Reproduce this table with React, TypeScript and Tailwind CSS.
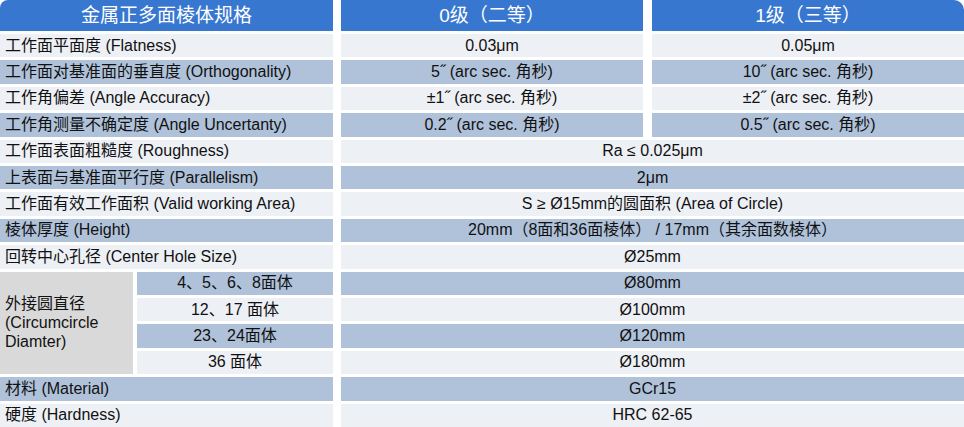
const FONT = { fontFamily: '"Liberation Sans", Arial, "Noto Sans CJK SC", sans-serif' };

const LIGHT = "bg-[#edf0f5]";
const DARK = "bg-[#afc2da]";

type Row = { label: string; a: string; b?: string; dark: boolean };

const topRows: Row[] = [
  { label: "工作面平面度 (Flatness)", a: "0.03μm", b: "0.05μm", dark: false },
  { label: "工作面对基准面的垂直度 (Orthogonality)", a: "5˝ (arc sec. 角秒)", b: "10˝ (arc sec. 角秒)", dark: true },
  { label: "工作角偏差 (Angle Accuracy)", a: "±1˝ (arc sec. 角秒)", b: "±2˝ (arc sec. 角秒)", dark: false },
  { label: "工作角测量不确定度 (Angle Uncertanty)", a: "0.2˝ (arc sec. 角秒)", b: "0.5˝ (arc sec. 角秒)", dark: true },
  { label: "工作面表面粗糙度 (Roughness)", a: "Ra ≤ 0.025μm", dark: false },
  { label: "上表面与基准面平行度 (Parallelism)", a: "2μm", dark: true },
  { label: "工作面有效工作面积 (Valid working Area)", a: "S ≥ Ø15mm的圆面积 (Area of Circle)", dark: false },
  { label: "棱体厚度 (Height)", a: "20mm（8面和36面棱体） / 17mm（其余面数棱体）", dark: true },
  { label: "回转中心孔径 (Center Hole Size)", a: "Ø25mm", dark: false },
];

const subRows = [
  { faces: "4、5、6、8面体", d: "Ø80mm", dark: true },
  { faces: "12、17 面体", d: "Ø100mm", dark: false },
  { faces: "23、24面体", d: "Ø120mm", dark: true },
  { faces: "36 面体", d: "Ø180mm", dark: false },
];

const bottomRows: Row[] = [
  { label: "材料 (Material)", a: "GCr15", dark: true },
  { label: "硬度 (Hardness)", a: "HRC 62-65", dark: false },
];

function LabelRow({ row }: { row: Row }) {
  const bg = row.dark ? DARK : LIGHT;
  return (
    <>
      <div className={`col-span-2 flex items-center pl-[5px] ${bg}`}>{row.label}</div>
      {row.b ? (
        <>
          <div className={`ml-[4px] flex items-center justify-center ${bg}`}>{row.a}</div>
          <div className={`ml-[5px] flex items-center justify-center ${bg}`}>{row.b}</div>
        </>
      ) : (
        <div className={`col-span-2 ml-[4px] flex items-center justify-center ${bg}`}>{row.a}</div>
      )}
    </>
  );
}

export default function App() {
  return (
    <div
      className="grid h-[427px] w-[964px] grid-cols-[133px_196px_306px_1fr] grid-rows-[31px_repeat(15,minmax(0,1fr))] gap-x-[4px] gap-y-[3px] bg-white text-[16px] leading-none text-[#111]"
      style={FONT}
    >
      {/* 表头 */}
      <div className="col-span-2 flex items-center justify-center rounded-tl-[8px] bg-[#3877d0] text-[19px] text-white">
        金属正多面棱体规格
      </div>
      <div className="ml-[4px] flex items-center justify-center bg-[#3877d0] text-[19px] text-white">
        0级（二等）
      </div>
      <div className="ml-[5px] flex items-center justify-center rounded-tr-[10px] bg-[#3877d0] text-[19px] text-white">
        1级（三等）
      </div>

      {topRows.map((r) => (
        <LabelRow key={r.label} row={r} />
      ))}

      {/* 外接圆直径 */}
      <div className="row-span-4 flex items-center bg-[#d9d9d9] pl-[5px] leading-[19px]">
        外接圆直径
        <br />
        (Circumcircle
        <br />
        Diamter)
      </div>
      {subRows.map((s, i) => {
        const bg = s.dark ? DARK : LIGHT;
        return (
          <div key={s.d} className="contents">
            <div className={`col-start-2 flex items-center justify-center ${bg}`} style={{ gridRowStart: 11 + i }}>
              {s.faces}
            </div>
            <div className={`col-span-2 ml-[4px] flex items-center justify-center ${bg}`} style={{ gridRowStart: 11 + i }}>
              {s.d}
            </div>
          </div>
        );
      })}

      {bottomRows.map((r) => (
        <LabelRow key={r.label} row={r} />
      ))}
    </div>
  );
}
